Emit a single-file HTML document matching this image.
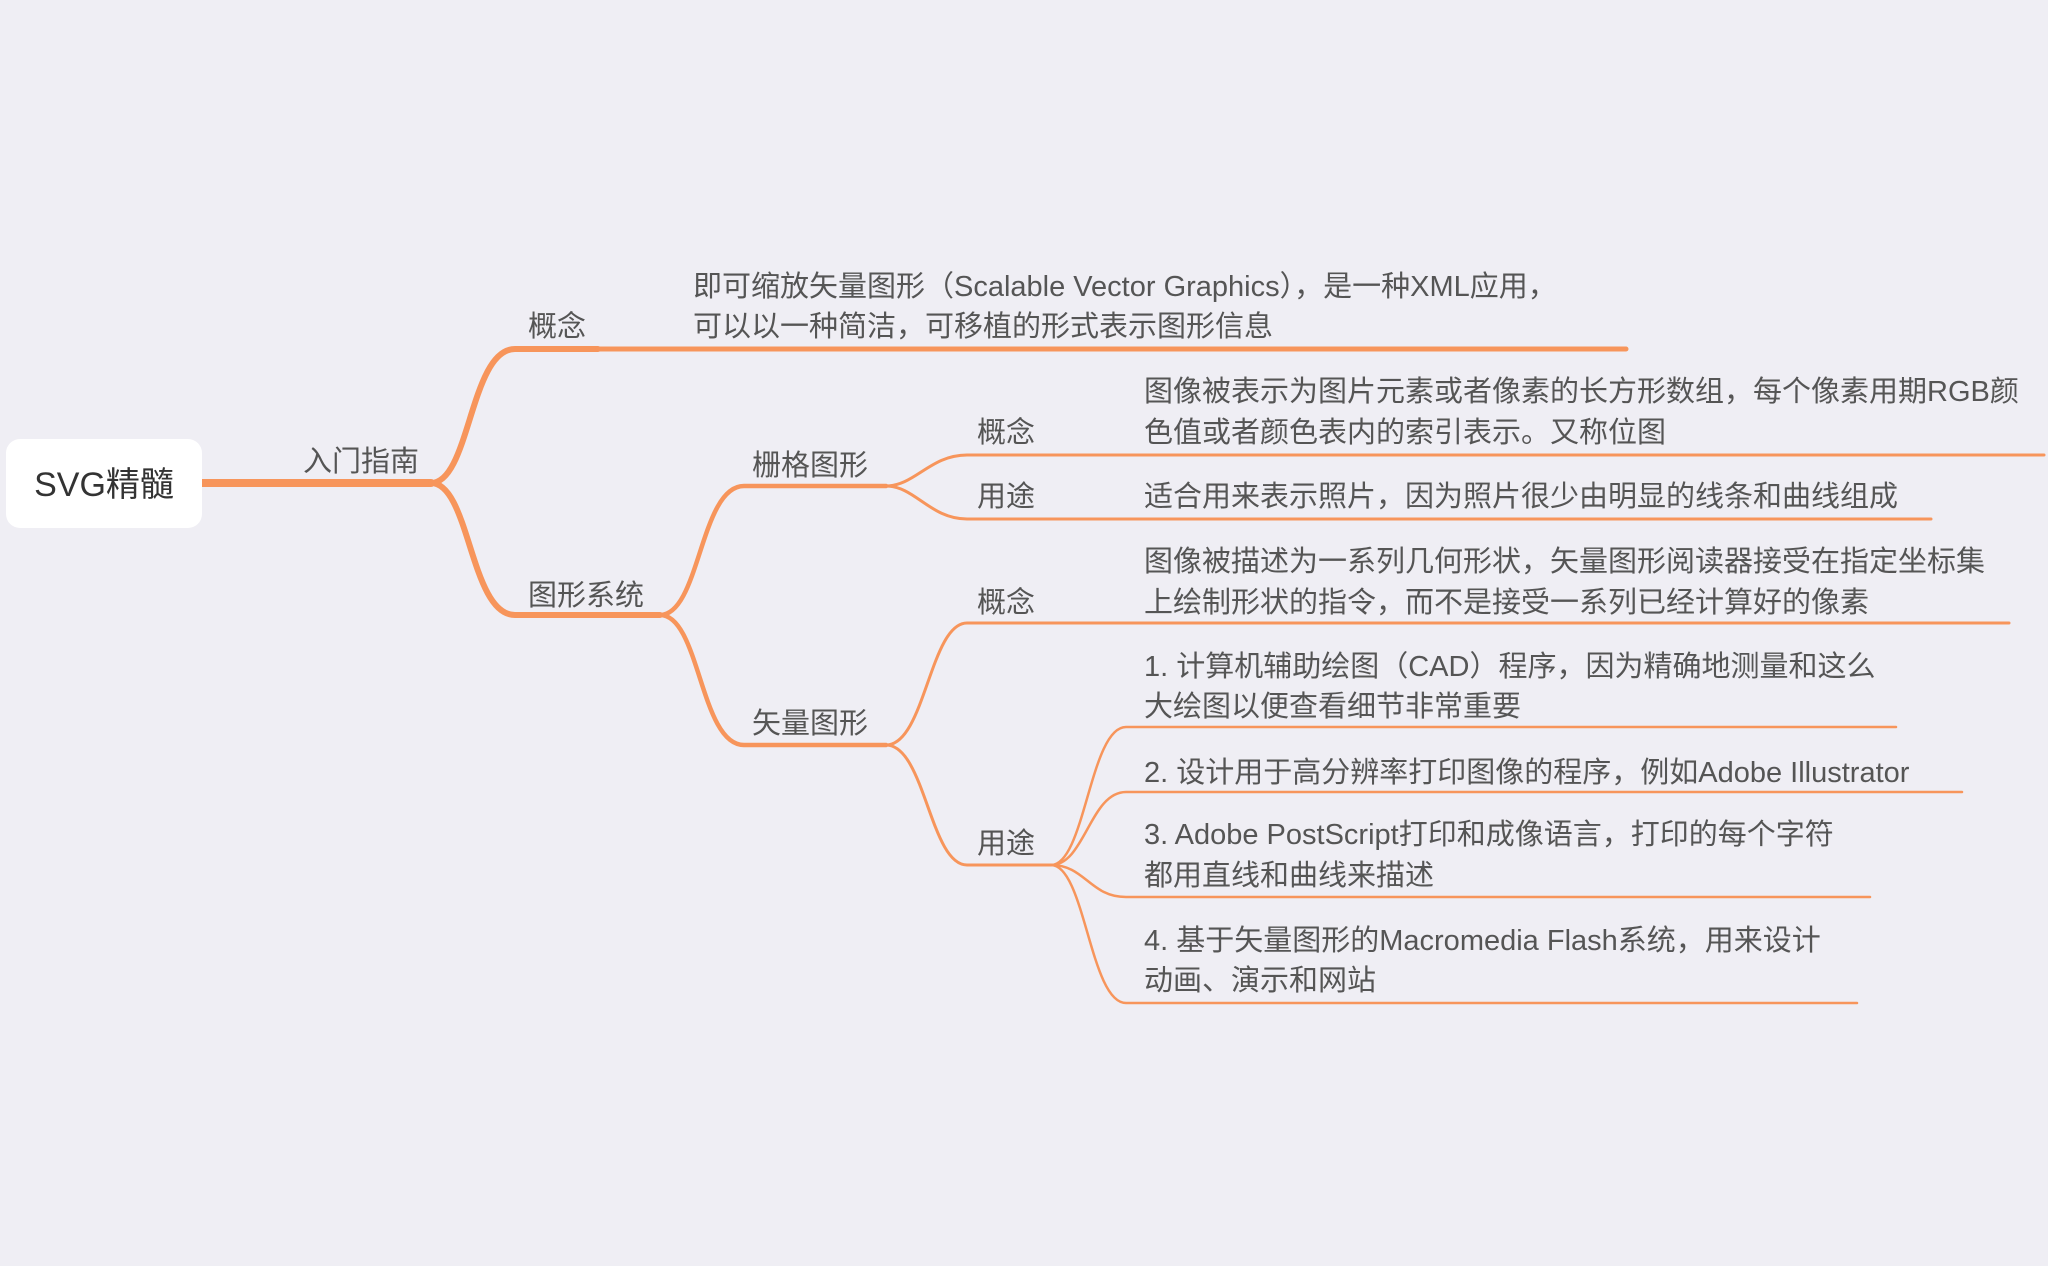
<!DOCTYPE html>
<html><head><meta charset="utf-8"><style>
html,body{margin:0;padding:0;background:#efeef4;}
svg{display:block}
text{font-family:"Liberation Sans","Noto Sans CJK SC",sans-serif;fill:#555;font-size:29px;dominant-baseline:central}
</style></head><body>
<svg width="2048" height="1266" viewBox="0 0 2048 1266" xmlns="http://www.w3.org/2000/svg">
<rect width="2048" height="1266" fill="#efeef4"/>
<g fill="none" stroke="#f7955b" stroke-linecap="round">
 <path d="M202 483 L431 483" stroke-width="8"/>
 <path d="M431 483 C470 483 470 349 515 349 L598 349" stroke-width="6"/>
 <path d="M431 483 C470 483 470 615 515 615 L660 615" stroke-width="6"/>
 <path d="M598 349 L1626 349" stroke-width="5"/>
 <path d="M660 615 C700 615 700 486 744 486 L886 486" stroke-width="4.5"/>
 <path d="M660 615 C700 615 700 745 744 745 L886 745" stroke-width="4.5"/>
 <path d="M886 486 C915 486 930 455 967 455 L2044 455" stroke-width="3"/>
 <path d="M886 486 C915 486 930 519 967 519 L1931 519" stroke-width="3"/>
 <path d="M886 745 C925 745 930 623 967 623 L2009 623" stroke-width="3"/>
 <path d="M886 745 C925 745 930 865 967 865 L1051 865" stroke-width="3"/>
 <g stroke-width="2.5">
 <path d="M1051 865 C1085 865 1090 727 1126 727 L1896 727"/>
 <path d="M1051 865 C1085 865 1090 792 1126 792 L1962 792"/>
 <path d="M1051 865 C1085 865 1090 897 1126 897 L1870 897"/>
 <path d="M1051 865 C1085 865 1090 1003 1126 1003 L1857 1003"/>
 </g>
</g>
<rect x="6" y="439" width="196" height="89" rx="14" fill="#ffffff"/>
<g transform="translate(0,2)">
<text x="104" y="483" text-anchor="middle" style="font-size:34px;fill:#333">SVG精髓</text>
<text x="303" y="460">入门指南</text>
<text x="528" y="325">概念</text>
<text x="693" y="285">即可缩放矢量图形（Scalable Vector Graphics），是一种XML应用，</text>
<text x="693" y="325">可以以一种简洁，可移植的形式表示图形信息</text>
<text x="528" y="594">图形系统</text>
<text x="752" y="464">栅格图形</text>
<text x="977" y="431">概念</text>
<text x="1144" y="390">图像被表示为图片元素或者像素的长方形数组，每个像素用期RGB颜</text>
<text x="1144" y="431">色值或者颜色表内的索引表示。又称位图</text>
<text x="977" y="495">用途</text>
<text x="1144" y="495">适合用来表示照片，因为照片很少由明显的线条和曲线组成</text>
<text x="752" y="722">矢量图形</text>
<text x="977" y="601">概念</text>
<text x="1144" y="560">图像被描述为一系列几何形状，矢量图形阅读器接受在指定坐标集</text>
<text x="1144" y="601">上绘制形状的指令，而不是接受一系列已经计算好的像素</text>
<text x="977" y="842">用途</text>
<text x="1144" y="665">1. 计算机辅助绘图（CAD）程序，因为精确地测量和这么</text>
<text x="1144" y="705">大绘图以便查看细节非常重要</text>
<text x="1144" y="771">2. 设计用于高分辨率打印图像的程序，例如Adobe Illustrator</text>
<text x="1144" y="833">3. Adobe PostScript打印和成像语言，打印的每个字符</text>
<text x="1144" y="874">都用直线和曲线来描述</text>
<text x="1144" y="939">4. 基于矢量图形的Macromedia Flash系统，用来设计</text>
<text x="1144" y="979">动画、演示和网站</text>
</g>
</svg>
</body></html>
